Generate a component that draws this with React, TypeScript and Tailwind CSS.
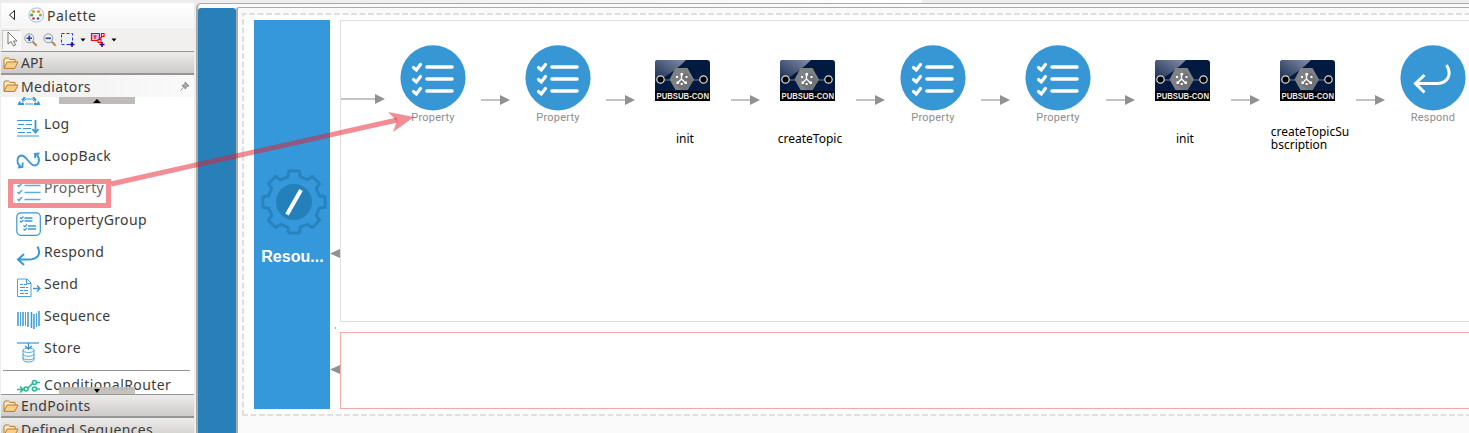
import React from "react";

const UI = "font-['Noto_Sans',sans-serif]";

function Folder() {
  return (
    <svg width="16" height="14" viewBox="0 0 16 14" className="shrink-0">
      <path d="M1 12V3.2L2 2h3.6L7 3.4h5V6" fill="#fbeac2" stroke="#b97b2c" />
      <path d="M1 12.4 4.2 6H15l-3.2 6.4Z" fill="#f8cf8a" stroke="#b97b2c" strokeLinejoin="round" />
    </svg>
  );
}

function Magnifier({ plus }: { plus?: boolean }) {
  return (
    <svg width="14" height="14" viewBox="0 0 14 14">
      <path d="m8.5 8.5 4.2 4.2" stroke="#b08a63" strokeWidth="2" />
      <circle cx="5.3" cy="5.3" r="4.5" fill="#e6eefb" stroke="#9a9a94" />
      <path d={plus ? "M2.6 5.3H8M5.3 2.6V8" : "M2.6 5.3H8"} stroke="#20459b" strokeWidth="1.6" />
    </svg>
  );
}

function Checks() {
  return (
    <svg width="26" height="20" viewBox="0 0 26 20" fill="none" stroke="#3798d8" strokeWidth="1.4">
      <path d="M8.500 3.5h16M8.500 10.5h16M8.500 17.5h16" />
      <path d="m1.5 3 1.5 1.500 3-3.500M1.5 10 3 11.500l3-3.500M1.5 17 3 18.500l3-3.500" strokeWidth="1.7" />
    </svg>
  );
}

const icons: Record<string, React.ReactNode> = {
  Log: (
    <svg width="26" height="20" viewBox="0 0 26 20" fill="none" stroke="#3798d8">
      <path d="M1 2.5h15M2 6.5h6m2 0h6M1 10.5h4m2 0h8M2 14.5h7m2 0h4M1 18h22" strokeWidth="1.1" />
      <path d="M19.5 2v12M16.500 11l3 3.500 3-3.500" strokeWidth="1.8" />
    </svg>
  ),
  LoopBack: (
    <svg width="26" height="20" viewBox="0 0 26 20" fill="none" stroke="#3798d8" strokeWidth="1.800">
      <path d="M5 16.500C0 14 .5 6 5.500 5.500c5 0 8 10 13 10 5-.5 6-7 2-11" />
      <path d="m2 17.500 4.500-.500.2-4.500M23.500 3.500l-4.500.3.200 4.500" />
    </svg>
  ),
  Property: <Checks />,
  PropertyGroup: (
    <svg width="26" height="26" viewBox="0 0 26 26" fill="none" stroke="#3798d8">
      <rect x=".8" y="1.8" width="23.5" height="22.5" rx="4" strokeWidth="1.2" />
      <path d="M8.500 7h8M8.500 10h8M12 15h8M12 18h8" strokeWidth="1.3" />
      <path d="m4 6.500 1.2 1.2L7.500 5.500M4 10l1.200 1.200L7.500 9M7.500 14.500l1.200 1.200 2.300-2.200M7.500 18l1.200 1.200 2.300-2.200" strokeWidth="1.3" />
    </svg>
  ),
  Respond: (
    <svg width="26" height="22" viewBox="0 0 26 22" fill="none" stroke="#3798d8" strokeWidth="2">
      <path d="M21.500 1.500c4 8 0 13-9 13H2M8 9l-6 5.500 6 5.500" />
    </svg>
  ),
  Send: (
    <svg width="26" height="20" viewBox="0 0 26 20" fill="none" stroke="#3798d8" strokeWidth=".9">
      <path d="M1.5 1h9.5l4 4v13.5H1.5ZM10.500 1v4.500H15" />
      <path d="M4 6.500h3M8 6.500h3M4 9.500h5M10 9.500h2M4 12.500h3M8 12.500h4M4 15.500h4M9 15.500h3" strokeWidth="1.1" />
      <path d="M17 10.500h7M21 7.500l3 3-3 3" strokeWidth="1.300" />
    </svg>
  ),
  Sequence: (
    <svg width="26" height="20" viewBox="0 0 26 20" fill="none" stroke="#3798d8">
      <path d="M2 2v14M7 2v14M12 2v15M15.500 2v16M18 4v15M23 1v15" strokeWidth="1.5" />
      <path d="M4.500 2v14M9.500 2v14M20.500 3v14" strokeWidth=".9" />
    </svg>
  ),
  Store: (
    <svg width="26" height="22" viewBox="0 0 26 22" fill="none" stroke="#3798d8" strokeWidth=".9">
      <path d="M1 2h22" strokeWidth="1.2" />
      <path d="M12.500 2v6M9 5l3.500 3L16 5" strokeWidth="1.4" />
      <ellipse cx="12.500" cy="9.300" rx="5.500" ry="2.200" />
      <path d="M7 9.500v8.500c0 4 11 4 11 0V9.500M7 13c0 3 11 3 11 0M7 16.500c0 3 11 3 11 0" />
    </svg>
  ),
};

const items = [
  { name: "Log", w: "tracking-[0.4px]" },
  { name: "LoopBack", w: "tracking-[0.4px]" },
  { name: "Property", w: "tracking-[0.4px]" },
  { name: "PropertyGroup", w: "tracking-[0.35px]" },
  { name: "Respond", w: "tracking-[0.35px]" },
  { name: "Send", w: "tracking-[0.3px]" },
  { name: "Sequence", w: "tracking-[0.3px]" },
  { name: "Store", w: "tracking-[0.5px]" },
];

function Drawer({ label, cls }: { label: string; cls: string }) {
  return (
    <div className={`flex shrink-0 items-center gap-[2px] border-t border-[#969696] pl-[2px] ${cls}`}>
      <Folder />
      <span className="whitespace-nowrap">{label}</span>
    </div>
  );
}

function Sidebar() {
  return (
    <aside className={`mr-px flex h-[433px] w-[194px] shrink-0 flex-col overflow-hidden pl-px pt-[3px] text-[14px] leading-[20px] text-[#3c3c3c] ${UI}`}>
      <div className="flex h-[24px] shrink-0 items-center bg-gradient-to-b from-white to-[#f5f5f5] pl-[7px]">
        <svg width="8" height="12" viewBox="0 0 8 12"><path d="M6.500 1.500v9L1.500 6Z" fill="#fff" stroke="#222" /></svg>
        <svg width="17" height="16" viewBox="0 0 17 16" className="ml-[12px]">
          <path d="M8 1C12 .5 15.500 3 15.500 8S12 15 8 15 1 12 1 8s3-6.500 7-7" fill="#f7faff" stroke="#9eb8df" />
          <circle cx="5.500" cy="4.500" r="1.600" fill="#c7a625" /><circle cx="10.500" cy="4.500" r="1.600" fill="#d89b27" />
          <circle cx="3.700" cy="8" r="1.600" fill="#4aa447" /><circle cx="12.500" cy="8" r="1.600" fill="#b3a42c" />
          <circle cx="5.500" cy="11.500" r="1.300" fill="#c33" /><circle cx="10" cy="11.500" r="1.300" fill="#3156b3" />
        </svg>
        <span className="ml-[2px] mt-px tracking-[0.5px]">Palette</span>
      </div>
      <div className="flex h-[24px] shrink-0 items-center border-t border-[#fafafa] bg-[#f1f0ef] pl-px">
        <div className="flex h-[20px] w-[19px] items-center justify-center border border-b-white border-l-[#c8c6c3] border-r-white border-t-[#c8c6c3] bg-[#f8f7f7]">
          <svg width="12" height="17" viewBox="0 0 12 17"><path d="M2 1v12l3-2.500L7.500 15l2-1L7.500 10H11Z" fill="#fff" stroke="#77776f" /></svg>
        </div>
        <div className="ml-[3px] flex"><Magnifier plus /></div>
        <div className="ml-[5px] flex"><Magnifier /></div>
        <svg width="16" height="16" viewBox="0 0 16 16" className="ml-[3px]">
          <path d="M1.500 1.500h11v11h-11Z" fill="none" stroke="#1736ff" strokeDasharray="3 2" />
          <path d="M9.500 12.500h5M12 10v5" stroke="#210a77" strokeWidth="1.500" />
        </svg>
        <svg width="6" height="4" viewBox="0 0 6 4" className="ml-[4px] mt-px"><path d="M.5.500h5L3 3.500Z" fill="#000" /></svg>
        <svg width="16" height="16" viewBox="0 0 16 16" className="ml-[4px]">
          <path d="M1.500 1.500h8v7h-8Z" fill="#c9c6f3" stroke="#f00" strokeWidth="1.200" />
          <path d="M3.500 4h3M5 4v3M8 8.500l4-4" fill="none" stroke="#f00" strokeWidth="1.200" />
          <path d="M11.500 1.500h2.500v3h-2.500ZM8 7.500h3v3H8Z" fill="#f1f0ef" stroke="#f00" strokeWidth="1.100" />
          <path d="M9.500 12.500h5M12 10v5" stroke="#210a77" strokeWidth="1.500" />
        </svg>
        <svg width="6" height="4" viewBox="0 0 6 4" className="ml-[5px] mt-px"><path d="M.5.500h5L3 3.500Z" fill="#000" /></svg>
      </div>
      <Drawer label="API" cls="h-[23px] bg-gradient-to-b from-[#ececeb] to-[#cecbc8] border-b" />
      <div className="flex h-[23px] shrink-0 items-center border-t border-[#969696] bg-gradient-to-r from-[#f1f0ef] to-[#fafafa] pl-[2px]">
        <Folder />
        <span className="ml-[2px] mt-px tracking-[0.350px]">Mediators</span>
        <svg width="10" height="10" viewBox="0 0 10 10" className="ml-auto mr-[4px]">
          <path d="m5 1 4 4-1.500.2L6 6.500 5.500 8 2 4.500 3.500 4 5 2.500ZM3.500 6.500.5 9.500" fill="#aaa" stroke="#777" strokeWidth=".8" />
        </svg>
      </div>
      <div className="relative flex min-h-0 flex-1 flex-col overflow-hidden bg-white">
        <div className="flex h-[12px] shrink-0 items-start">
          <svg width="24" height="8" viewBox="0 0 24 8" className="ml-[16px]" fill="none" stroke="#3798d8">
            <path d="m5 3.500 3-3.500M19 3.500 16 0M3 4.500l-1 2.500h5M21 4.500l1 2.500h-5" strokeWidth="2" /><path d="M5 5.500 9 2h6l4 3.500M8 7h8" />
          </svg>
          <div className="ml-[18px] flex h-[7px] w-[76px] items-center justify-center bg-[#bfbbb6]">
            <svg width="8" height="4" viewBox="0 0 8 4"><path d="M0 4h8L4 0Z" fill="#000" /></svg>
          </div>
        </div>
        {items.map((i) => (
          <div key={i.name} className="flex h-[32px] shrink-0 pl-[15px]">
            <div className="flex w-[26px] shrink-0 items-center justify-center pt-[6px]">{icons[i.name]}</div>
            <span className={`ml-[2px] mt-[5px] ${i.w}`}>{i.name}</span>
          </div>
        ))}
        <div className="ml-[2px] mt-[5px] h-px w-[187px] shrink-0 bg-[#969696]" />
        <div className="flex h-[24px] shrink-0 pl-[15px]">
          <svg width="26" height="18" viewBox="0 0 26 18" fill="none" stroke="#26ba95" strokeWidth="1.600" className="mt-[7px]">
            <path d="M1 11.500h6M4 8.500l3 3-3 3M12 10l5-5M20 4.500h4M20 11h4" />
            <circle cx="10" cy="11" r="2" /><circle cx="18.500" cy="4.500" r="2" /><circle cx="18.500" cy="11" r="2" />
          </svg>
          <span className="ml-[2px] mt-[4px] tracking-[0.430px]">ConditionalRouter</span>
        </div>
        <div className="absolute bottom-0 left-[58px] flex h-[7px] w-[76px] items-center justify-center bg-[#bfbbb6]/90">
          <svg width="6" height="4" viewBox="0 0 6 4"><path d="M0 0h6L3 4Z" fill="#000" /></svg>
        </div>
      </div>
      <Drawer label="EndPoints" cls="h-[23px] border-b bg-gradient-to-b from-[#ececeb] to-[#cecbc8] pt-px tracking-[0.400px]" />
      <Drawer label="Defined Sequences" cls="-mb-[7px] h-[23px] bg-gradient-to-b from-[#ececeb] to-[#cecbc8] pt-px tracking-[0.350px]" />
    </aside>
  );
}

function Arrow({ w, cls }: { w: number; cls: string }) {
  return (
    <svg width={w} height="10" viewBox={`0 0 ${w} 10`} className={`shrink-0 ${cls}`}>
      <path d={`M0 5H${w - 8}`} stroke="#c4c4c4" strokeWidth="2" />
      <path d={`M${w - 10} 0v10L${w} 5Z`} fill="#919191" />
    </svg>
  );
}

function Circle({ kind }: { kind: "Property" | "Respond" }) {
  return (
    <div className="flex w-[66px] shrink-0 flex-col items-center pt-[24px]">
      <svg width="66" height="66" viewBox="0 0 66 66" fill="none" stroke="#fff">
        <circle cx="33" cy="32.800" r="32.600" fill="#3797d5" stroke="none" />
        {kind === "Property" ? (
          <>
            <path d="M27 22h25M27 34h25M27 46h25" strokeWidth="3.600" strokeLinecap="round" />
            <path d="m13.500 22.500 2.800 2.500 4.200-5.500M13.500 34.500l2.800 2.500 4.200-5.500M13.500 46.500l2.800 2.500 4.200-5.500" strokeWidth="3.200" strokeLinecap="round" />
          </>
        ) : (
          <path d="M46.500 20c6 10 1 18-9 18.500H17M24.500 30 15.500 38.500l9 9" strokeWidth="3" />
        )}
      </svg>
      <span className="font-['Roboto',sans-serif] text-[11px] leading-[13px] tracking-[0.220px] text-[#8d8d8d]">{kind}</span>
    </div>
  );
}

function Connector({ label }: { label: string }) {
  return (
    <div className="flex w-[66px] shrink-0 flex-col items-center pt-[39px]">
      <svg width="55" height="41" viewBox="0 0 55 41" className="-ml-px shrink-0 overflow-visible">
        <defs>
          <linearGradient id="shine" x1="0" y1="1" x2=".8" y2="0"><stop stopColor="#071c42" /><stop offset="1" stopColor="#79859f" /></linearGradient>
        </defs>
        <path d="M0 41V3Q0 0 3 0h49q3 0 3 3v38Z" fill="#031a40" />
        <path d="M0 27V3Q0 0 3 0h28Q22 10 0 23Z" fill="url(#shine)" />
        <path d="M9 20h37" stroke="#72798a" />
        <path d="M14.500 19.500 20.500 8h12l6.500 11.500L32.500 30h-12Z" fill="#808184" />
        <path d="m31 12 7 9-5.500 9H27l-6-6Z" fill="#727376" />
        <path d="M26.500 19v-4m0 4-3.500 3.500m3.500-3.500 3.500 3.500" stroke="#fff" strokeWidth="1.300" />
        <path d="M25.500 13h2.500v2.500h-2.500zM21.500 21.500h2.500v2.500h-2.500zM29.500 21.500h2.500v2.500h-2.500zM21 16h2v2h-2zM30.500 16h2v2h-2zM25.700 23h2v2h-2z" fill="#fff" />
        <circle cx="5.500" cy="19.500" r="3.700" fill="#000" stroke="#dedede" strokeWidth="1.200" />
        <circle cx="48.500" cy="19.500" r="3.700" fill="#000" stroke="#dedede" strokeWidth="1.200" />
        <path d="M0 31h55v10H0Z" fill="#000" />
        <text x="1.500" y="38.500" fill="#e8e8e8" fontFamily="Liberation Sans, sans-serif" fontWeight="bold" fontSize="9" textLength="52.500" lengthAdjust="spacingAndGlyphs">PUBSUB-CON</text>
      </svg>
      <div className={`ml-[4px] mt-[17px] flex h-[40px] items-center whitespace-pre text-[12px] leading-[13px] text-black ${UI}`}>{label}</div>
    </div>
  );
}

const nodes = [
  <Circle kind="Property" />,
  <Circle kind="Property" />,
  <Connector label="init" />,
  <Connector label="createTopic" />,
  <Circle kind="Property" />,
  <Circle kind="Property" />,
  <Connector label="init" />,
  <Connector label={"createTopicSu\nbscription"} />,
  <Circle kind="Respond" />,
];

function BackArrow({ cls }: { cls: string }) {
  return <svg width="10" height="9" viewBox="0 0 10 9" className={cls}><path d="M10 0v9L0 4.500Z" fill="#919191" /></svg>;
}

function gearPath() {
  const p: string[] = [];
  for (let i = 0; i < 8; i++) {
    [[-14, 26], [-9.500, 31.500], [9.500, 31.500], [14, 26]].forEach(([a, r]) => {
      const t = ((i * 45 + a) * Math.PI) / 180;
      p.push(`${(33 + r * Math.sin(t)).toFixed(1)} ${(33 - r * Math.cos(t)).toFixed(1)}`);
    });
  }
  return `M${p.join("L")}Z`;
}

export default function App() {
  return (
    <div className="relative flex h-[433px] w-full overflow-hidden bg-[#ededed]">
      <Sidebar />
      <div className="ml-px flex min-w-0 flex-1 flex-col">
        <div className="ml-[84px] h-[3px] w-[642px] shrink-0 bg-gradient-to-r from-[#ededed] to-white" />
        <main className="flex min-h-0 min-w-0 flex-1 overflow-hidden rounded-tl-[5px] border-l-2 border-t border-[#aaa] bg-[#fafafa]">
          <div className="mt-[4px] w-[38px] shrink-0 rounded-t-[3px] bg-[#2980b9]" />
          <div className="mt-[3px] min-w-0 flex-1 rounded-tl-[3px] border-l-2 border-t border-[#aaa] pl-[4px] pt-[5px]">
            <div className="relative flex h-[403px] w-[1240px] bg-white pl-[12px] pt-[7px]">
              <svg className="absolute left-0 top-0" width="1240" height="403" fill="none" stroke="#dfdfdf" strokeWidth="2" strokeDasharray="6 2.500"><path d="M1 403V1h1239M0 402h1240" /></svg>
              <div className="flex h-[389px] w-[76px] shrink-0 flex-col items-center bg-[#3598db] pt-[149px]">
                <svg width="66" height="66" viewBox="0 0 66 66" className="ml-[3px]">
                  <path d={gearPath()} fill="none" stroke="#2783bd" strokeWidth="3" strokeLinejoin="round" />
                  <circle cx="33" cy="33" r="18" fill="#2480ba" />
                  <path d="M26 45.500 40 21" stroke="#fff" strokeWidth="4" />
                </svg>
                <span className="ml-px mt-[12px] font-['Liberation_Sans',sans-serif] text-[16px] font-bold leading-[20px] tracking-[0.050px] text-white">Resou...</span>
              </div>
              <div className="flex w-[10px] shrink-0 flex-col">
                <BackArrow cls="mt-[229px]" />
                <div className="ml-[5px] mt-[69px] h-[2px] w-px bg-[#aaa]" />
                <BackArrow cls="mt-[36px]" />
              </div>
              <div className="flex flex-1 flex-col gap-[10px]">
                <div className="flex h-[302px] border border-[#dfdfdf]">
                  <Arrow w={44} cls="mt-[73px]" />
                  {nodes.map((n, i) => (
                    <React.Fragment key={i}>
                      {i > 0 && <Arrow w={29} cls="ml-[15px] mr-[15px] mt-[74px]" />}
                      {i === 0 ? <div className="ml-[15px] shrink-0">{n}</div> : n}
                    </React.Fragment>
                  ))}
                </div>
                <div className="h-[77px] border border-[#f5aaa5]" />
              </div>
            </div>
          </div>
        </main>
      </div>
      <div className="absolute left-[8px] top-[179px] h-[29px] w-[103px] border-[5px] border-[#f58d94] bg-white/20" />
      <svg className="absolute left-0 top-0" width="430" height="220">
        <path d="M111 184 397 120" stroke="#e81c29" strokeOpacity=".5" strokeWidth="5" />
        <path d="m388 112 26 5-21 15 4-11Z" fill="#e81c29" fillOpacity=".5" />
      </svg>
    </div>
  );
}
